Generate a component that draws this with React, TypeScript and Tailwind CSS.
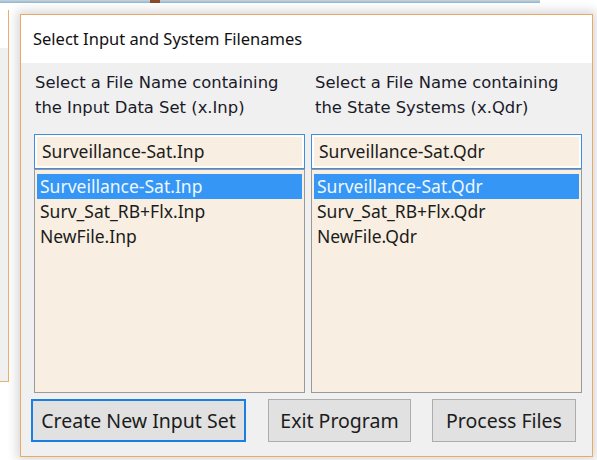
import React from "react";

const ui = { fontFamily: '"Noto Sans", "Open Sans", sans-serif' };
const hand = { fontFamily: '"Comic Sans MS", "DejaVu Sans", sans-serif' };

type Column = {
  label: [string, string];
  labelPad: string;
  value: string;
  files: string[];
};

const columns: Column[] = [
  {
    label: ["Select a File Name containing", "the Input Data Set (x.Inp)"],
    labelPad: "pl-[1px]",
    value: "Surveillance-Sat.Inp",
    files: ["Surveillance-Sat.Inp", "Surv_Sat_RB+Flx.Inp", "NewFile.Inp"],
  },
  {
    label: ["Select a File Name containing", "the State Systems (x.Qdr)"],
    labelPad: "pl-[4px]",
    value: "Surveillance-Sat.Qdr",
    files: ["Surveillance-Sat.Qdr", "Surv_Sat_RB+Flx.Qdr", "NewFile.Qdr"],
  },
];

function FilePicker({ col }: { col: Column }) {
  return (
    <div className="flex w-[271px] flex-col">
      <div
        className={`h-[50px] whitespace-nowrap text-[16.4px] leading-[25px] text-[#1a1a2a] ${col.labelPad}`}
        style={hand}
      >
        <div>{col.label[0]}</div>
        <div>{col.label[1]}</div>
      </div>
      <div className="mt-[14px] h-[35px] border border-[#3f8fdc] bg-white p-[2px]">
        <div className="flex h-full items-center bg-[#f8efe2] pl-[5px] text-[17.5px] text-[#1c1c1c]" style={ui}>
          {col.value}
        </div>
      </div>
      <div className="h-[224px] border border-[#9a9a9a] bg-[#f8efe2] px-[2px] pt-[4px]" style={ui}>
        {col.files.map((f, i) => (
          <div
            key={f}
            className={`flex h-[25px] items-center pl-[3px] text-[17.5px] ${
              i === 0 ? "bg-[#3596f5] text-[#eef6ff]" : "text-[#1c1c1c]"
            }`}
          >
            {f}
          </div>
        ))}
      </div>
    </div>
  );
}

function Button({ label, width, focused }: { label: string; width: string; focused?: boolean }) {
  return (
    <div
      className={`flex h-[43px] items-center justify-center bg-[#e1e1e1] text-[19.5px] text-[#1c1c1c] ${width} ${
        focused ? "border-2 border-[#1a7fe0]" : "border border-[#adadad]"
      }`}
      style={ui}
    >
      {label}
    </div>
  );
}

export default function App() {
  return (
    <div className="relative h-[460px] w-[597px] overflow-hidden bg-white">
      {/* window strip peeking out above */}
      <div className="absolute left-0 top-0 h-[3px] w-[540px] bg-gradient-to-b from-[#c9d4dc] to-[#8fb6cf]" />
      <div className="absolute left-[150px] top-0 h-[3px] w-[10px] bg-[#8a4a2a]" />

      {/* window behind on the left */}
      <div className="absolute left-0 top-[10px] flex h-[372px] w-[9px] flex-col border-b border-r border-[#eab06e]">
        <div className="h-[38px] bg-white" />
        <div className="flex-1 bg-[#f0f0f0]" />
      </div>

      {/* dialog window */}
      <div className="absolute left-[20px] top-[14px] flex h-[443px] w-[573px] flex-col border border-[#eaa966] bg-[#f0f0f0] shadow-[0_0_10px_3px_rgba(0,0,0,0.16)]">
        <div className="flex h-[48px] items-center bg-white pl-[12px] text-[16.5px] text-[#111]" style={ui}>
          Select Input and System Filenames
        </div>
        <div className="flex flex-1 flex-col pt-[7px]">
          <div className="flex gap-[6px] pl-[13px]">
            {columns.map((c) => (
              <FilePicker key={c.value} col={c} />
            ))}
          </div>
          <div className="mt-[6px] flex pl-[10px]">
            <Button label="Create New Input Set" width="w-[215px]" focused />
            <div className="ml-[22px]">
              <Button label="Exit Program" width="w-[143px]" />
            </div>
            <div className="ml-[21px]">
              <Button label="Process Files" width="w-[144px]" />
            </div>
          </div>
        </div>
      </div>
    </div>
  );
}
